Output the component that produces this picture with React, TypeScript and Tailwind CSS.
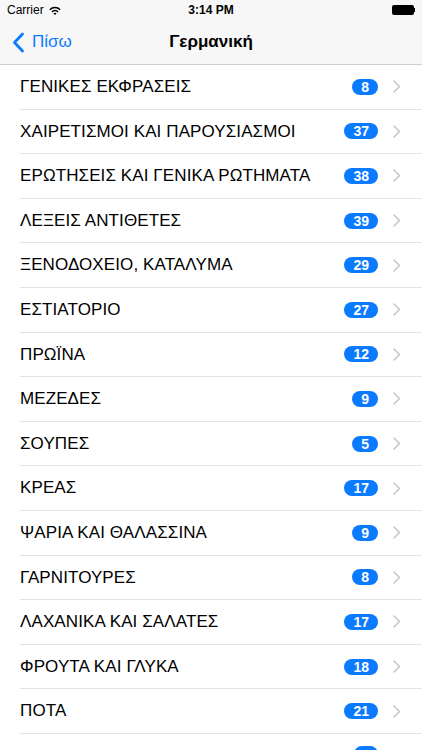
import React from 'react';

const items: { label: string; count: number }[] = [
  { label: 'ΓΕΝΙΚΕΣ ΕΚΦΡΑΣΕΙΣ', count: 8 },
  { label: 'ΧΑΙΡΕΤΙΣΜΟΙ ΚΑΙ ΠΑΡΟΥΣΙΑΣΜΟΙ', count: 37 },
  { label: 'ΕΡΩΤΗΣΕΙΣ ΚΑΙ ΓΕΝΙΚΑ ΡΩΤΗΜΑΤΑ', count: 38 },
  { label: 'ΛΕΞΕΙΣ ΑΝΤΙΘΕΤΕΣ', count: 39 },
  { label: 'ΞΕΝΟΔΟΧΕΙΟ, ΚΑΤΑΛΥΜΑ', count: 29 },
  { label: 'ΕΣΤΙΑΤΟΡΙΟ', count: 27 },
  { label: 'ΠΡΩΪΝΑ', count: 12 },
  { label: 'ΜΕΖΕΔΕΣ', count: 9 },
  { label: 'ΣΟΥΠΕΣ', count: 5 },
  { label: 'ΚΡΕΑΣ', count: 17 },
  { label: 'ΨΑΡΙΑ ΚΑΙ ΘΑΛΑΣΣΙΝΑ', count: 9 },
  { label: 'ΓΑΡΝΙΤΟΥΡΕΣ', count: 8 },
  { label: 'ΛΑΧΑΝΙΚΑ ΚΑΙ ΣΑΛΑΤΕΣ', count: 17 },
  { label: 'ΦΡΟΥΤΑ ΚΑΙ ΓΛΥΚΑ', count: 18 },
  { label: 'ΠΟΤΑ', count: 21 },
];

function Wifi() {
  return (
    <svg width="12" height="9" viewBox="0 0 12 9">
      <path d="M0.3 3.2 A8 8 0 0 1 11.7 3.2 L10.6 4.3 A6.4 6.4 0 0 0 1.4 4.3 Z" fill="#000" />
      <path d="M2.4 5.3 A5 5 0 0 1 9.6 5.3 L8.5 6.4 A3.4 3.4 0 0 0 3.5 6.4 Z" fill="#000" />
      <path d="M4.5 7.4 A2.1 2.1 0 0 1 7.5 7.4 L6 8.9 Z" fill="#000" />
    </svg>
  );
}

function Chevron({ className }: { className?: string }) {
  return (
    <svg width="8" height="13" viewBox="0 0 8 13" className={className}>
      <path d="M1 1 L6.5 6.5 L1 12" fill="none" stroke="currentColor" strokeWidth="1.6" strokeLinecap="round" strokeLinejoin="round" />
    </svg>
  );
}

function Badge({ count }: { count: number }) {
  return (
    <span className="h-[16px] min-w-[25px] px-[9px] rounded-full bg-[#0a7aff] text-white text-[14px] font-bold flex items-center justify-center leading-none">
      {count}
    </span>
  );
}

export default function App() {
  return (
    <div
      className="w-[422px] h-[750px] overflow-hidden bg-white text-black"
      style={{ fontFamily: '"Liberation Sans", Arial, sans-serif' }}
    >
      {/* status bar */}
      <div className="h-5 bg-[#f7f7f7] flex items-center px-[7px] text-[12px] relative">
        <span>Carrier</span>
        <span className="ml-[5px] flex items-center"><Wifi /></span>
        <span className="absolute left-0 right-0 text-center font-bold">3:14 PM</span>
        <span className="ml-auto flex items-center">
          <span className="w-[22px] h-[10px] bg-black rounded-[2px]" />
          <span className="w-[1.5px] h-[4px] bg-black" />
        </span>
      </div>

      {/* nav bar */}
      <div className="h-[45px] bg-[#f7f7f7] border-b border-[#cfcfd2] flex items-center relative">
        <div className="flex items-center pl-[12px] text-[#0a7aff] text-[17px]">
          <svg width="13" height="21" viewBox="0 0 13 21">
            <path d="M10.5 2 L2.5 10.5 L10.5 19" fill="none" stroke="currentColor" strokeWidth="2.8" strokeLinecap="round" strokeLinejoin="round" />
          </svg>
          <span className="ml-[7px]">Πίσω</span>
        </div>
        <div className="absolute left-0 right-0 text-center text-[17px] font-bold pointer-events-none">
          Γερμανική
        </div>
      </div>

      {/* list */}
      <div>
        {items.map((item) => (
          <div key={item.label} className="h-[44.6px] pl-5 flex">
            <div className="flex-1 flex items-center border-b border-[#e3e3e5] pr-[21px]">
              <span className="flex-1 text-[17px] tracking-[0.1px]">{item.label}</span>
              <Badge count={item.count} />
              <Chevron className="ml-[15px] text-[#c7c7cc]" />
            </div>
          </div>
        ))}
        {/* next row, only its badge top shows above the fold */}
        <div className="h-[44.6px] pl-5 flex">
          <div className="flex-1 flex items-center pr-[44px] justify-end">
            <span className="h-[16px] w-[24px] rounded-full bg-[#0a7aff] mb-[4px]" />
          </div>
        </div>
      </div>
    </div>
  );
}
